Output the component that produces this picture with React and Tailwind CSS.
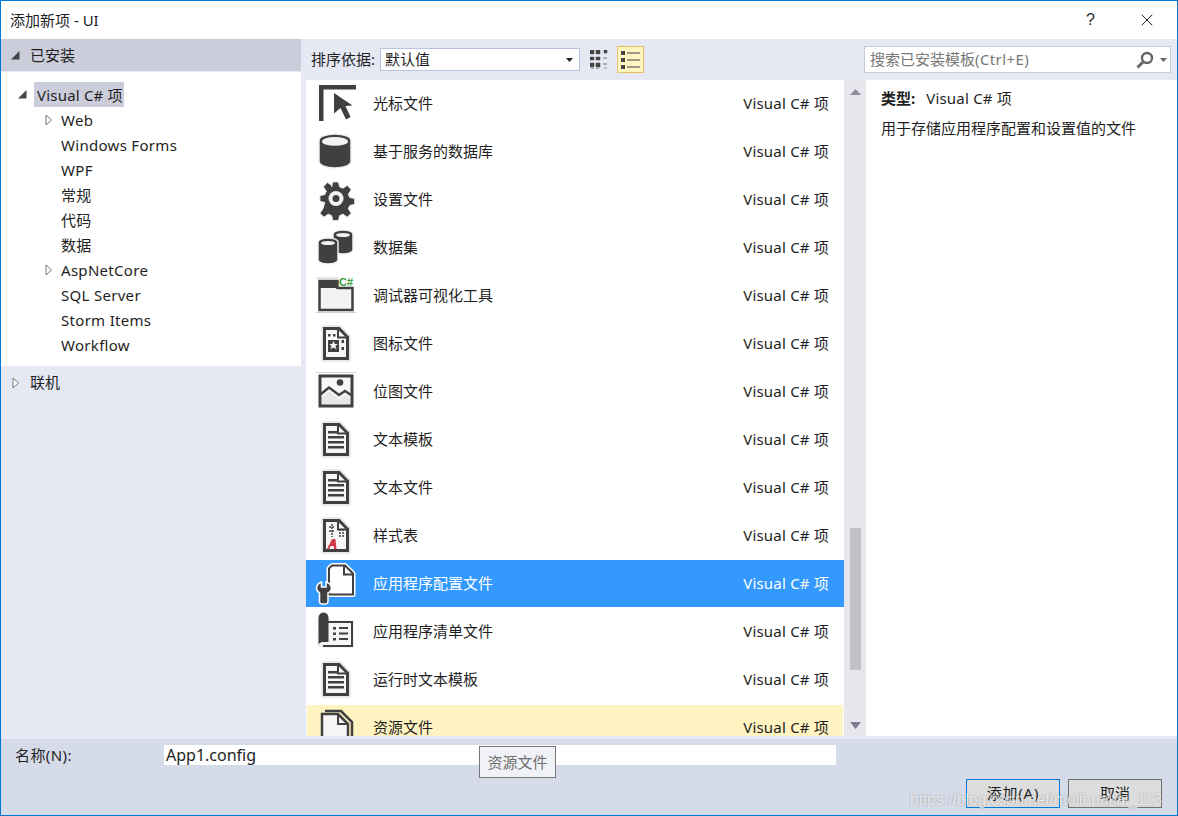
import { X } from "lucide-react";

const D = "#404040";

// shared page outline with dog-ear, light halo behind it
function Page({ children, halo = "#e4e4e4" }) {
  return (
    <>
      <path d="M6 6h18l10 10v25H6z" fill="#fff" stroke={halo} strokeWidth="1.5" />
      <path d="M8.5 8.5h14.5l8.5 8.5v21.5H8.500z" fill="#f6f6f6" stroke={D} strokeWidth="3" />
      <path d="M22 8v9.500h9.500" fill="none" stroke={D} strokeWidth="2" />
      {children}
    </>
  );
}

function TextDoc() {
  return (
    <Page>
      <path d="M12 15h9v2.500h-9zM12 20h16v2.500H12zM12 25h16v2.500H12zM12 30h16v2.500H12z" fill={D} />
    </Page>
  );
}

function Cylinder({ x, y, w, h }) {
  const ry = w * 0.2;
  return (
    <>
      <path
        d={`M${x} ${y + ry}a${w / 2} ${ry} 0 0 1 ${w} 0v${h - 2 * ry}a${w / 2} ${ry} 0 0 1 ${-w} 0z`}
        fill={D}
        stroke="#f0f0f0"
        strokeWidth="1.5"
      />
      <ellipse cx={x + w / 2} cy={y + ry + 1} rx={w / 2 - 3} ry={ry - 2} fill="#f2f2f2" />
    </>
  );
}

const icons = [
  <>
    <path d="M3 5h37v4.500H7.500V41H3z" fill={D} />
    <path d="M18 13v20.500l6.500-5.500 5.500 11.500 4.500-2.500-5-11 7-.5z" fill={D} />
  </>,
  <Cylinder x={3} y={6} w={32} h={34} />,
  <>
    <g fill={D} stroke="#eeeeee" strokeWidth="1">
      <path d="M17 6h6l1 5 3.500 1.500 4.500-3 4 4.500-3 4.500 1.500 3.500 5 1v6l-5 1-1.500 3.500 3 4.500-4 4-4.500-3-3.500 1.500-1 5h-6l-1-5-3.500-1.500-4.500 3-4-4 3-4.500L9 27l-5-1v-6l5-1 1.500-3.500-3-4.500 4-4.500 4.500 3L16 11z" transform="translate(0 0) scale(.98)" />
    </g>
    <circle cx="20" cy="22.500" r="7.500" fill="#f2f2f2" />
    <circle cx="20" cy="22.500" r="3.500" fill={D} />
  </>,
  <>
    <Cylinder x={17} y={6} w={20} h={24} />
    <Cylinder x={2} y={14} w={20} h={26} />
  </>,
  <>
    <path d="M0 6h22M0 40.500h40" stroke="#cfcfcf" strokeWidth="1" />
    <path d="M3.500 9h18v7h15v22h-33z" fill="#f3f3f3" stroke={D} strokeWidth="2.500" />
    <path d="M3 8h19v8H3z" fill={D} />
    <text x="23" y="14" fontSize="11" fontWeight="700" fill="#3a9a3a" fontFamily="Liberation Sans, sans-serif">C#</text>
  </>,
  <Page>
    <path d="M12 14h2.500v2.500H12zM17 14h2.500v2.500H17zM25.500 20h2.500v3h-2.500zM25.500 27h2.500v3h-2.500zM12 20h11v12H12z" fill={D} />
    <path d="M17.500 21l1.400 3h3l-2.400 2 1 3.300-3-1.900-3 1.900 1-3.300-2.400-2h3z" fill="#f4f4f4" />
  </Page>,
  <>
    <path d="M0 4.500h40" stroke="#d6d6d6" strokeWidth="1" />
    <rect x="4" y="8" width="32" height="30" fill="#f8f8f8" stroke={D} strokeWidth="3" />
    <circle cx="24" cy="14.500" r="3.300" fill={D} />
    <path d="M5 26l8-6.500 10 7.500 6-4 6 4" fill="none" stroke={D} strokeWidth="2.500" />
    <path d="M5 30l8-6.500 10 7.500 6-4 6 4v6H5z" fill="#8a8a8a" opacity=".15" />
  </>,
  <TextDoc />,
  <TextDoc />,
  <Page>
    <path d="M16 12v13M13 15h6M13 19h6M23 18h5M23 21h5M23 24h5" stroke={D} strokeWidth="1.500" strokeDasharray="2 1" fill="none" />
    <path d="M11 37l5-10h3.500l1 10h-2.500l-.3-3h-3l-1.500 3z" fill="#d23a4a" />
  </Page>,
  <>
    <path d="M16 5.500h13l8 8v21H13V8.500z" fill="#fff" stroke="#fff" strokeWidth="5" strokeLinejoin="round" />
    <path d="M16 5.500h13l8 8v21H13V8.500z" fill="#fff" stroke={D} strokeWidth="2" />
    <path d="M28 5.500v9h9" fill="none" stroke={D} strokeWidth="2" />
    <path d="M5 22.500v5h4.500v-5a7.200 7.200 0 0 1 5.500 6c0 2.300-1.400 4-3.500 5V42a2.500 2.500 0 0 1-2.500 2.500H5.500A2.500 2.500 0 0 1 3 42v-8.500c-1.700-1-3-2.700-3-5a7.200 7.200 0 0 1 5-6z" transform="translate(.5 -.5)" fill={D} stroke="#fff" strokeWidth="1.500" />
  </>,
  <>
    <path d="M3 10a4.500 5.500 0 0 1 9 0v3h25v26H10c-5 1-8-1-8-4z" fill="#f5f5f5" stroke="#e6e6e6" strokeWidth="1" />
    <path d="M2.500 10a5 5.500 0 0 1 10 0v24H7c-2 0-4.500 1-4.500 3z" fill={D} />
    <path d="M12 14h24v24H7" fill="none" stroke={D} strokeWidth="2" />
    <path d="M17 19h3v2.500h-3zM17 24.500h3V27h-3zM17 30h3v2.500h-3zM23 19h9v2H23zM23 24.500h9v2H23zM23 30h9v2H23z" fill={D} />
  </>,
  <TextDoc />,
  <>
    <path d="M6 9h16l10 10v20H6z" fill="#f6f6f6" stroke={D} strokeWidth="2.500" />
    <path d="M9 6h16l11 11v22" fill="none" stroke={D} strokeWidth="2.500" />
    <path d="M22 9v10h10" fill="none" stroke={D} strokeWidth="2" />
  </>,
];

const rows = [
  "光标文件",
  "基于服务的数据库",
  "设置文件",
  "数据集",
  "调试器可视化工具",
  "图标文件",
  "位图文件",
  "文本模板",
  "文本文件",
  "样式表",
  "应用程序配置文件",
  "应用程序清单文件",
  "运行时文本模板",
  "资源文件",
];

const treeItems = [
  { name: "Web", arrow: true },
  { name: "Windows Forms" },
  { name: "WPF" },
  { name: "常规" },
  { name: "代码" },
  { name: "数据" },
  { name: "AspNetCore", arrow: true },
  { name: "SQL Server" },
  { name: "Storm Items" },
  { name: "Workflow" },
];

function Hollow() {
  return (
    <svg width="8" height="12" viewBox="0 0 8 12">
      <path d="M1 1l5.500 5L1 11z" fill="#fff" stroke="#7a7a7a" />
    </svg>
  );
}

function Filled() {
  return (
    <svg width="9" height="9" viewBox="0 0 9 9">
      <path d="M8.500 0v8.500H0z" fill="#444" />
    </svg>
  );
}

export default function App() {
  return (
    <div className="relative w-[1178px] h-[816px] flex flex-col overflow-hidden border border-[#0078d7] bg-white text-[15px] text-[#1e1e1e] font-['Noto_Sans','Noto_Sans_CJK_SC',sans-serif]">
      {/* Title bar */}
      <div className="h-[38px] shrink-0 flex items-center pl-[9px] bg-white">
        <span>添加新项 - UI</span>
        <span className="ml-auto text-[16px] font-['Liberation_Sans',sans-serif]">?</span>
        <X className="ml-[42px] mr-[20px] w-[20px] h-[20px] text-[#222]" strokeWidth={1.2} />
      </div>

      <div className="h-[700px] shrink-0 flex bg-[#e6e9f4]">
        {/* Left tree */}
        <div className="w-[300px] shrink-0 flex flex-col">
          <div className="h-[32px] flex items-center pl-[10px] bg-[#cbcdda]">
            <Filled />
            <span className="ml-[10px]">已安装</span>
          </div>
          <div className="mt-px h-[294px] bg-white pt-[10px]">
            <div className="h-[25px] flex items-center pl-[17px]">
              <Filled />
              <span className="ml-[7px] px-[3px] w-[90px] h-[25px] leading-[25px] pt-px whitespace-nowrap tracking-[0.2px] bg-[#cbcdda]">Visual C# 项</span>
            </div>
            {treeItems.map((t) => (
              <div key={t.name} className="h-[25px] flex items-center pl-[44px]">
                <span className="w-[16px] flex items-center">{t.arrow && <Hollow />}</span>
                <span className="pt-px tracking-[0.3px]">{t.name}</span>
              </div>
            ))}
          </div>
          <div className="h-[35px] flex items-center pl-[11px] pb-[2px]">
            <Hollow />
            <span className="ml-[10px]">联机</span>
          </div>
        </div>

        {/* Center and details */}
        <div className="flex-1 min-w-0 flex flex-col">
          {/* Toolbar */}
          <div className="h-[41px] shrink-0 flex items-center pl-[10px]">
            <span className="w-[69px] shrink-0 whitespace-nowrap">排序依据:</span>
            <div className="w-[200px] h-[23px] flex items-center justify-between pl-[4px] pr-[5px] bg-white border border-[#b8c4de]">
              <span>默认值</span>
              <svg width="7" height="4" viewBox="0 0 7 4" className="mr-px">
                <path d="M0 0h7L3.500 4z" fill="#222" />
              </svg>
            </div>
            <svg width="18" height="20" viewBox="0 0 18 20" className="ml-[10px]">
              <path d="M0 0h4v4H0zM6 0h4v4H6zM14 0h3v3h-3zM0 7h4v3H0zM6 7h4v3H6zM0 13h4v4H0zM6 13h4v4H6zM1 18.500h3M6 18.500h3M14 18h3" fill="#444" stroke="#444" strokeWidth=".5" />
              <path d="M13 8h4M13 14h4" stroke="#777" />
            </svg>
            <div className="ml-[9px] w-[27px] h-[27px] flex items-center justify-center bg-[#fdf4bf] border border-[#e5c365]">
              <svg width="19" height="20" viewBox="0 0 19 20">
                <path d="M0 1h4v4H0zM0 8h4v4H0zM0 15h4v4H0z" fill="#444" />
                <path d="M6 3h13M6 10h13M6 17h13" stroke="#444" strokeWidth="1.200" />
              </svg>
            </div>
            {/* Search */}
            <div className="ml-auto mr-[6px] w-[307px] h-[27px] flex items-center pl-[5px] pr-[3px] bg-white border border-[#c5cbdc] text-[#787878]">
              <span>搜索已安装模板<span className="tracking-[0.4px]">(Ctrl+E)</span></span>
              <svg width="18" height="18" viewBox="0 0 18 18" className="ml-auto">
                <circle cx="11" cy="7" r="5" fill="none" stroke="#666" strokeWidth="2.400" />
                <path d="M7 11l-5.500 5.500" stroke="#666" strokeWidth="3" />
              </svg>
              <svg width="7" height="4" viewBox="0 0 7 4" className="ml-[6px]">
                <path d="M0 0h7L3.500 4z" fill="#666" />
              </svg>
            </div>
          </div>

          <div className="h-[656px] shrink-0 flex">
            {/* Template list */}
            <div className="ml-[5px] w-[538px] shrink-0 bg-white overflow-hidden">
              {rows.map((name, i) => (
                <div
                  key={name}
                  className={
                    "h-[47px] shrink-0 mb-px flex items-center " +
                    (i === 10
                      ? "pl-[10px] pr-[15px] bg-[#3399ff] text-white"
                      : i === 13
                        ? "pl-[9px] pr-[14px] pb-[2px] ml-px mr-px bg-[#fff3c2] border-t border-white"
                        : "pl-[10px] pr-[15px]")
                  }
                >
                  <svg width="40" height="48" viewBox="0 0 40 48" className="shrink-0 self-start overflow-visible">
                    {icons[i]}
                  </svg>
                  <span className="ml-[17px]">{name}</span>
                  <span className="ml-auto tracking-[0.2px]">Visual C# 项</span>
                </div>
              ))}
            </div>

            {/* Scrollbar */}
            <div className="w-[22px] shrink-0 flex flex-col items-center bg-[#e6e6ec] pt-[9px] pb-[7px]">
              <svg width="11" height="6" viewBox="0 0 11 6">
                <path d="M0 6l5.500-6L11 6z" fill="#8e8e9e" />
              </svg>
              <div className="mt-[433px] w-[11px] h-[142px] bg-[#c2c3c9]" />
              <svg width="11" height="7" viewBox="0 0 11 7" className="mt-auto">
                <path d="M0 0h11L5.500 7z" fill="#7c7c92" />
              </svg>
            </div>

            {/* Details */}
            <div className="flex-1 min-w-0 bg-white pl-[15px] pt-[6px]">
              <div className="h-[25px] flex items-center">
                <span className="font-bold">类型:</span>
                <span className="ml-[11px] tracking-[0.2px]">Visual C# 项</span>
              </div>
              <div className="mt-[5px] h-[25px] flex items-center">用于存储应用程序配置和设置值的文件</div>
            </div>
          </div>
          <div className="h-[3px]" />
        </div>
      </div>

      {/* Footer */}
      <div className="flex-1 min-h-0 bg-[#d6dbe9] pl-[14px] pr-[15px] pt-[6px]">
        <div className="flex items-center h-[20px]">
          <span className="w-[149px] shrink-0 tracking-[0.4px]">名称(N):</span>
          <div className="w-[672px] h-[20px] leading-[20px] bg-white pl-[2px] text-[16px]">App1.config</div>
        </div>
        <div className="mt-[14px] flex justify-end gap-[8px]">
          <button className="w-[94px] h-[29px] tracking-[0.8px] bg-[#dddddd] border border-[#0078d7]">添加(A)</button>
          <button className="w-[94px] h-[29px] bg-[#dddddd] border border-[#707070]">取消</button>
        </div>
      </div>

      {/* Tooltip */}
      <div className="absolute left-[478px] top-[745px] w-[77px] h-[32px] flex items-center justify-center bg-[#f1f2f7] border border-[#767676] text-[#6d6d6d]">
        资源文件
      </div>

      {/* Watermark */}
      <div className="absolute left-[909px] top-[787px] text-[15.6px] whitespace-nowrap text-white/70 [text-shadow:0_0_2px_rgba(90,90,90,0.5)] font-['Liberation_Sans',sans-serif]">
        https://blog.csdn.net/molihuakai_113
      </div>
    </div>
  );
}
